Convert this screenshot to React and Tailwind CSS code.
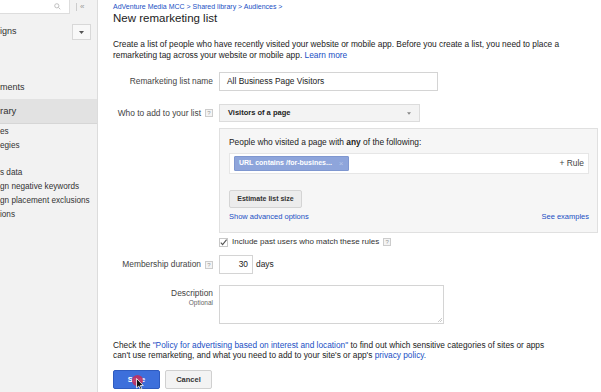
import React from "react";

const Help = () => (
  <span className="inline-flex items-center justify-center w-[8px] h-[8px] border border-[#ccc] bg-[#f4f4f4] text-[6px] leading-none text-[#999] ml-[4px]">?</span>
);

export default function App() {
  return (
    <div className="w-[601px] h-[392px] overflow-hidden bg-white flex text-[#222]" style={{ fontFamily: '"Liberation Sans", Arial, sans-serif' }}>
      {/* Sidebar */}
      <div className="w-[98px] shrink-0 bg-[#f2f2f2] border-r border-[#dcdcdc] flex flex-col text-[8.2px] text-[#333]">
        <div className="flex items-center h-[14px]">
          <div className="w-[70px] h-[14px] bg-white border border-[#ddd] border-l-0 border-t-0 flex items-center justify-end pr-[8px]">
            <svg width="7" height="7" viewBox="0 0 10 10" fill="none" stroke="#bbb" strokeWidth="1.3"><circle cx="4" cy="4" r="3" /><path d="M6.3 6.3L9 9" /></svg>
          </div>
          <div className="w-px h-[8px] bg-[#ccc] ml-[6px]" />
          <span className="ml-[3px] text-[8px] text-[#999] leading-none">«</span>
        </div>
        <div className="flex items-center justify-between h-[28px] mt-[4px] pr-[6px]">
          <span className="text-[9px]">igns</span>
          <div className="w-[19px] h-[16px] bg-[#f8f8f8] border border-[#d8d8d8] flex items-center justify-center">
            <svg width="5" height="3" viewBox="0 0 5 3"><path d="M0 0h5L2.5 3z" fill="#555" /></svg>
          </div>
        </div>
        <div className="h-[35px]" />
        <div className="text-[9px] leading-[12px]">ments</div>
        <div className="h-[7px] border-b border-[#e2e2e2]" />
        <div className="h-[24px] bg-[#e2e2e2] border-b border-[#d6d6d6] flex items-center text-[9.5px]">rary</div>
        <div className="flex flex-col leading-[14px] pt-[1px]">
          <span>es</span>
          <span>egies</span>
          <span className="h-[13px]" />
          <span>s data</span>
          <span className="whitespace-nowrap">gn negative keywords</span>
          <span className="whitespace-nowrap">gn placement exclusions</span>
          <span>ions</span>
        </div>
      </div>

      {/* Main */}
      <div className="relative flex-1 pl-[15px] pr-[3px] flex flex-col">
        <div className="pt-[2px] text-[7px] leading-[9px] text-[#1a4fc4] whitespace-nowrap">
          AdVenture Media MCC &gt; Shared library &gt; Audiences &gt;
        </div>
        <div className="text-[11.5px] leading-[14px] text-[#222]">New remarketing list</div>

        <p className="mt-[14px] text-[8.35px] leading-[11px] whitespace-nowrap">
          Create a list of people who have recently visited your website or mobile app. Before you create a list, you need to place a
          <br />
          remarketing tag across your website or mobile app. <span className="text-[#1a4fc4]">Learn more</span>
        </p>

        <div className="grid grid-cols-[100px_1fr] gap-x-[6px] text-[8.4px] mt-[11px]">
          {/* Row: name */}
          <div className="h-[19px] flex items-center justify-end text-[#444]">Remarketing list name</div>
          <div>
            <div className="w-[219px] h-[19px] border border-[#d4d4d4] bg-white flex items-center px-[7px] text-[#222]">All Business Page Visitors</div>
          </div>

          {/* Row: who */}
          <div className="mt-[13px] h-[18px] flex items-center justify-end text-[#444]">
            Who to add to your list<Help />
          </div>
          <div className="mt-[13px]">
            <div className="w-[201px] h-[18px] border border-[#dcdcdc] bg-[#f3f3f3] flex items-center justify-between px-[8px]">
              <span className="font-bold text-[7.5px] text-[#222]">Visitors of a page</span>
              <svg width="4" height="3" viewBox="0 0 5 3"><path d="M0 0h5L2.5 3z" fill="#888" /></svg>
            </div>
          </div>

          {/* Panel */}
          <div />
          <div className="mt-[6px] h-[105px] border border-[#e0e0e0] bg-[#f6f6f6] pl-[9px] pr-[8px] pt-[8px] flex flex-col">
            <div className="text-[8.4px] leading-[10px]">People who visited a page with <b>any</b> of the following:</div>
            <div className="mt-[6px] h-[21px] bg-white border border-[#e6e6e6] flex items-center justify-between pl-[4px] pr-[4px]">
              <div className="h-[15px] w-[115px] bg-[#8ea5db] border border-[#7f97d0] rounded-[1px] flex items-center px-[4px] text-white font-bold text-[7px] whitespace-nowrap">
                URL contains /for-busines...<span className="ml-[7px] font-normal text-[#b7c6ea] text-[8px]">×</span>
              </div>
              <span className="text-[#444] text-[8.4px]">+ Rule</span>
            </div>
            <div className="mt-[16px]">
              <div className="w-[73px] h-[18px] bg-[#ececec] border border-[#d4d4d4] rounded-[2px] flex items-center justify-center font-bold text-[7px] text-[#333]">Estimate list size</div>
            </div>
            <div className="mt-[4px] flex justify-between text-[7.5px] text-[#1a4fc4] leading-[10px]">
              <span>Show advanced options</span>
              <span>See examples</span>
            </div>
          </div>

          {/* Checkbox */}
          <div />
          <div className="mt-[4px] h-[10px] flex items-center text-[8px] text-[#333]">
            <svg width="9" height="9" viewBox="0 0 9 9" className="mr-[4px]">
              <rect x="0.5" y="0.5" width="8" height="8" fill="white" stroke="#c8c8c8" />
              <path d="M1.8 4.6L3.6 6.6L7.6 1.6" fill="none" stroke="#555" strokeWidth="1.1" />
            </svg>
            Include past users who match these rules<Help />
          </div>

          {/* Membership duration */}
          <div className="mt-[8px] h-[19px] flex items-center justify-end text-[#444]">
            Membership duration<Help />
          </div>
          <div className="mt-[8px] flex items-center">
            <div className="w-[34px] h-[19px] border border-[#d4d4d4] bg-white flex items-center justify-end pr-[4px] text-[8.4px]">30</div>
            <span className="ml-[3px]">days</span>
          </div>

          {/* Description */}
          <div className="mt-[11px] flex flex-col items-end text-[#444] pt-[3px]">
            <span className="text-[8.4px] leading-[10px]">Description</span>
            <span className="text-[6.5px] leading-[10px] text-[#666]">Optional</span>
          </div>
          <div className="mt-[11px]">
            <div className="relative w-[225px] h-[39px] border border-[#d4d4d4] bg-white">
              <svg width="5" height="5" viewBox="0 0 5 5" className="absolute right-[1px] bottom-[1px]">
                <path d="M1 5L5 1M3 5L5 3" stroke="#aaa" strokeWidth="0.6" />
              </svg>
            </div>
          </div>
        </div>

        <p className="mt-[16px] text-[8.3px] leading-[10px] whitespace-nowrap text-[#222]">
          Check the <span className="text-[#1a4fc4]">"Policy for advertising based on interest and location"</span> to find out which sensitive categories of sites or apps
          <br />
          can't use remarketing, and what you need to add to your site's or app's <span className="text-[#1a4fc4]">privacy policy.</span>
        </p>

        <div className="mt-[10px] flex gap-[5px]">
          <div className="relative w-[47px] h-[19px] bg-[#3d6fdb] border border-[#2f5bbf] rounded-[2px] flex items-center justify-center text-white font-bold text-[7.5px]">
            Save
            <div className="absolute left-[18px] top-[4px] w-[11px] h-[11px] rounded-full bg-[#c0305f] opacity-90" />
            <svg width="8" height="12" viewBox="0 0 8 12" className="absolute left-[22px] top-[7px]">
              <path d="M0.5 0.5V10L2.8 8L4.4 11.3L5.8 10.6L4.3 7.5H7.3Z" fill="#111" stroke="white" strokeWidth="0.8" />
            </svg>
          </div>
          <div className="w-[47px] h-[19px] bg-[#f3f3f3] border border-[#d0d0d0] rounded-[2px] flex items-center justify-center font-bold text-[7.5px] text-[#333]">Cancel</div>
        </div>
      </div>
    </div>
  );
}
